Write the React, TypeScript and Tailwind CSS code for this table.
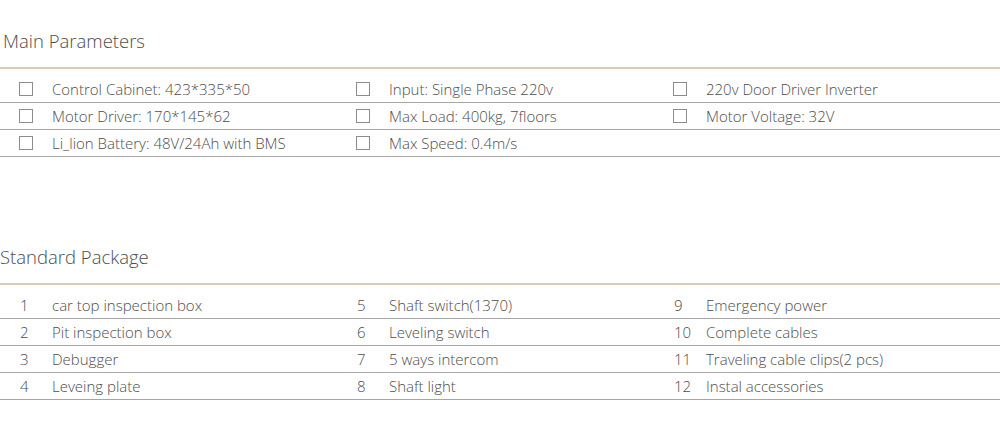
import React from 'react';

const params = [
  ['Control Cabinet: 423*335*50', 'Input: Single Phase 220v', '220v Door Driver Inverter'],
  ['Motor Driver: 170*145*62', 'Max Load: 400kg, 7floors', 'Motor Voltage: 32V'],
  ['Li_lion Battery: 48V/24Ah with BMS', 'Max Speed: 0.4m/s', ''],
];

const pkg = [
  ['1', 'car top inspection box', '5', 'Shaft switch(1370)', '9', 'Emergency power'],
  ['2', 'Pit inspection box', '6', 'Leveling switch', '10', 'Complete cables'],
  ['3', 'Debugger', '7', '5 ways intercom', '11', 'Traveling cable clips(2 pcs)'],
  ['4', 'Leveing plate', '8', 'Shaft light', '12', 'Instal accessories'],
];

const Box: React.FC = () => (
  <span className="block w-[14px] h-[14px] border border-[#8c8c8c] bg-white" />
);

const rowCls =
  'grid grid-cols-[52px_285px_52px_265px_52px_1fr] h-[27px] items-center border-b border-[#a6a6a6] leading-[26px]';

const App: React.FC = () => {
  return (
    <div
      className="w-[1000px] h-[440px] bg-white text-[15px] font-light text-[#4d4d4d] overflow-hidden"
      style={{ fontFamily: '"Open Sans", "Liberation Sans", sans-serif' }}
    >
      <h2 className="pt-[28px] pl-[3px] text-[18.5px] leading-[26px] font-light text-[#4d4d4d]">Main Parameters</h2>
      <div className="mt-[13px] border-t-2 border-[#d8ccb0] pt-[7px]">
        {params.map((row, i) => (
          <div key={i} className={rowCls}>
            {row.map((txt, j) => (
              <React.Fragment key={j}>
                <div className="pl-[19px]">{txt && <Box />}</div>
                <div className="whitespace-nowrap">{txt}</div>
              </React.Fragment>
            ))}
          </div>
        ))}
      </div>

      <h2 className="mt-[87px] text-[18.5px] leading-[26px] font-light text-[#4d4d4d]">Standard Package</h2>
      <div className="mt-[13px] border-t-2 border-[#d8ccb0] pt-[7px]">
        {pkg.map((row, i) => (
          <div key={i} className={rowCls}>
            {row.map((txt, j) => (
              <div key={j} className={j % 2 === 0 ? 'pl-[20px]' : 'whitespace-nowrap'}>
                {txt}
              </div>
            ))}
          </div>
        ))}
      </div>
    </div>
  );
};

export default App;
